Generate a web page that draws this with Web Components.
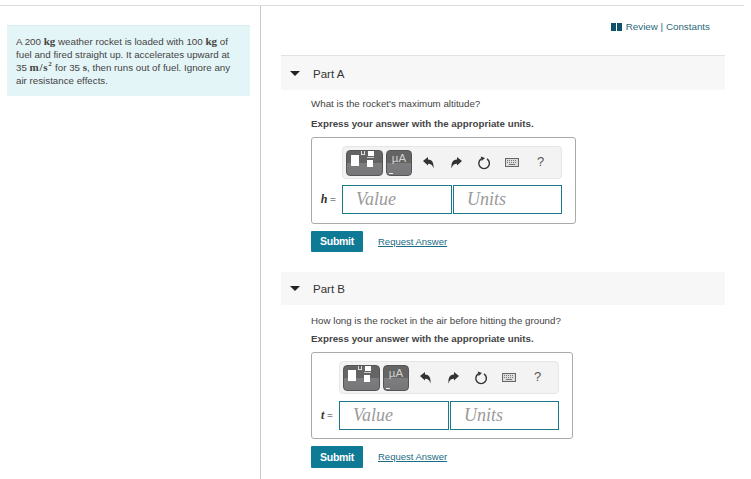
<!DOCTYPE html>
<html>
<head>
<meta charset="utf-8">
<style>
  html, body { margin: 0; padding: 0; background: #fff; }
  body { font-family: "Liberation Sans", Arial, sans-serif; color: #333; overflow: hidden; }
</style>
</head>
<body>
<mp-page>
  <problem-intro slot="left">
    <div>A 200 <b-unit>kg</b-unit> weather rocket is loaded with 100 <b-unit>kg</b-unit> of</div>
    <div>fuel and fired straight up. It accelerates upward at</div>
    <div>35 <b-unit class="wide">m/s<sup>2</sup></b-unit> for 35 <b-unit>s</b-unit>, then runs out of fuel. Ignore any</div>
    <div>air resistance effects.</div>
  </problem-intro>
  <review-links slot="right"></review-links>
  <part-section slot="right" label="Part A" question="What is the rocket's maximum altitude?" variable="h" box-width="265"></part-section>
  <part-section slot="right" label="Part B" question="How long is the rocket in the air before hitting the ground?" variable="t" box-width="262" style="margin-top:20px"></part-section>
</mp-page>

<script>
// inline units in the problem text
class BUnit extends HTMLElement {
  constructor() {
    super();
    this.attachShadow({ mode: 'open' }).innerHTML = `
      <style>
        :host { display: inline; font-family: "Liberation Serif", serif; font-weight: bold; font-size: 11px; color: #444; }
        :host(.wide) { letter-spacing: .7px; }
        ::slotted(sup) { font-size: 7px; line-height: 0; }
      </style>
      <slot></slot>`;
  }
}
customElements.define('b-unit', BUnit);

const pageTpl = document.createElement('template');
pageTpl.innerHTML = `
  <style>
    :host { display: block; width: 751px; height: 479px; box-sizing: border-box; padding-top: 5px; }
    .frame { width: 744px; height: 474px; border-top: 1px solid #dcdcdc; display: grid; grid-template-columns: 260px 1px 1fr; box-sizing: border-box; }
    .left { padding: 19px 10px 0 7px; }
    .rule { background: #c9c9c9; }
    .right { padding: 0 19px 0 20px; }
  </style>
  <div class="frame">
    <div class="left"><slot name="left"></slot></div>
    <div class="rule"></div>
    <div class="right"><slot name="right"></slot></div>
  </div>`;
class MpPage extends HTMLElement {
  constructor() {
    super();
    this.attachShadow({ mode: 'open' }).appendChild(pageTpl.content.cloneNode(true));
  }
}
customElements.define('mp-page', MpPage);

const introTpl = document.createElement('template');
introTpl.innerHTML = `
  <style>
    :host { display: block; width: 243px; height: 71px; box-sizing: border-box; background: #e4f5f7; border-top: 1px solid #d9eef0; padding: 9px 8px 0 9px; font-size: 9.75px; line-height: 13px; color: #444; white-space: nowrap; }
  </style>
  <slot></slot>`;
class ProblemIntro extends HTMLElement {
  constructor() {
    super();
    this.attachShadow({ mode: 'open' }).appendChild(introTpl.content.cloneNode(true));
  }
}
customElements.define('problem-intro', ProblemIntro);

const reviewTpl = document.createElement('template');
reviewTpl.innerHTML = `
  <style>
    :host { display: flex; justify-content: flex-end; align-items: center; height: 49px; box-sizing: border-box; padding: 0 15px 8px 0; gap: 4px; font-size: 9.8px; color: #2b6a7c; }
    svg { display: block; }
  </style>
  <svg width="11" height="8" viewBox="0 0 11 8"><path d="M0 0h5v8H0zM6 0h5v8H6z" fill="#0d5266"/></svg>
  <span>Review | Constants</span>`;
class ReviewLinks extends HTMLElement {
  constructor() {
    super();
    this.attachShadow({ mode: 'open' }).appendChild(reviewTpl.content.cloneNode(true));
  }
}
customElements.define('review-links', ReviewLinks);

const toolbarTpl = document.createElement('template');
toolbarTpl.innerHTML = `
  <style>
    :host { display: flex; align-items: center; height: 33px; box-sizing: border-box; background: #f3f3f3; border: 1px solid #e6e6e6; border-radius: 4px; padding: 0 0 0 3px; }
    .tpl, .mu { height: 26px; box-sizing: border-box; border-radius: 4px; background: linear-gradient(#646464 0, #646464 50%, #7d7d80 50%, #77777a 100%); border: 1px solid #555; position: relative; }
    .tpl { width: 37px; }
    .mu { width: 26px; margin-left: 3px; color: #d0d0d0; font: 11.5px/15px "Liberation Sans", sans-serif; text-align: center; }
    .mu::after { content: ""; position: absolute; left: 2px; bottom: 1px; width: 4px; height: 1px; background: #eee; }
    .tpl i { position: absolute; background: #fff; display: block; }
    .tpl i.a { left: 4px; top: 4px; width: 8px; height: 11px; }
    .tpl i.b { left: 14px; top: 0; width: 4px; height: 4px; background: none; border: 1px solid #ddd; border-top: none; box-sizing: border-box; }
    .tpl i.c { left: 21px; top: 0; width: 6px; height: 5px; }
    .tpl i.d { left: 20px; top: 6px; width: 7px; height: 1px; background: #ccc; }
    .tpl i.e { left: 20px; top: 9px; width: 6px; height: 7px; }
    .tools { display: grid; grid-template-columns: repeat(5, 28px); margin-left: 2px; justify-items: center; align-items: center; }
    svg { display: block; }
    .help { font-size: 13px; line-height: 15px; color: #555; margin: -2px 0 0 1px; }
  </style>
  <div class="tpl"><i class="a"></i><i class="b"></i><i class="c"></i><i class="d"></i><i class="e"></i></div>
  <div class="mu">&#181;A</div>
  <div class="tools">
    <svg width="11" height="12" viewBox="0 0 11 12"><path d="M0 4 5 0v2.600c4 0 6 3 5.500 9-1-3.500-2.500-4.800-5.500-4.800V8.600z" fill="#333"/></svg>
    <svg width="11" height="12" viewBox="0 0 11 12"><path d="M11 4 6 0v2.600c-4 0-6 3-5.500 9 1-3.500 2.500-4.800 5.500-4.800V8.600z" fill="#333"/></svg>
    <svg width="14" height="14" viewBox="0 0 14 14"><path d="M10 2.900a5.300 5.300 0 1 1-5.800 0" fill="none" stroke="#333" stroke-width="1.400"/><path d="M3.800 .6 8 2 4.600 5z" fill="#333"/></svg>
    <svg width="14" height="9" viewBox="0 0 14 9"><rect x=".5" y=".5" width="13" height="8" fill="#ddd" stroke="#666"/><path d="M2 2.500h10M2 4.500h10" stroke="#777" stroke-dasharray="1 1"/><path d="M4 6.500h6" stroke="#777"/></svg>
    <span class="help">?</span>
  </div>`;
class MathToolbar extends HTMLElement {
  constructor() {
    super();
    this.attachShadow({ mode: 'open' }).appendChild(toolbarTpl.content.cloneNode(true));
  }
}
customElements.define('math-toolbar', MathToolbar);

const partTpl = document.createElement('template');
partTpl.innerHTML = `
  <style>
    :host { display: block; }
    .head { display: flex; align-items: center; height: 33px; background: #f7f7f7; padding-left: 9px; font-size: 11.5px; color: #333; }
    :host([label="Part A"]) .head { border-top: 1px solid #e2e2e2; height: 35px; box-sizing: border-box; }
    :host([label="Part A"]) .label { margin-top: 2px; }
    .tri { width: 0; height: 0; border-left: 5px solid transparent; border-right: 5px solid transparent; border-top: 5px solid #222; margin-right: 13px; }
    .body { padding: 6px 0 0 30px; }
    .q { font-size: 9.75px; line-height: 13px; color: #444; height: 13px; margin-top: 1px; }
    :host([label="Part B"]) .q { margin-top: 3px; }
    .hint { font-size: 9.75px; font-weight: bold; line-height: 13px; color: #444; margin-top: 7px; height: 14px; }
    :host([label="Part B"]) .hint { margin-top: 5px; }
    .box { box-sizing: border-box; height: 87px; margin-top: 6px; border: 1px solid #aaa; border-radius: 3px; padding: 8px 13px 0 0; }
    .grid { display: grid; row-gap: 6px; justify-content: end; grid-template-columns: auto 220px; }
    :host([label="Part B"]) .grid { row-gap: 7px; }
    math-toolbar { grid-column: 2; }
    .var { display: flex; align-items: center; justify-content: flex-end; padding-right: 6px; font: 10.5px "Liberation Serif", serif; color: #333; white-space: pre; }
    .var em { font-weight: bold; font-size: 12px; }
    .inputs { display: grid; grid-template-columns: 110px 109px; gap: 1px; }
    .inputs div { box-sizing: border-box; height: 29px; border: 1px solid #1a7a8c; padding-left: 13px; font: italic 18px/26px "Liberation Serif", serif; color: #9a9a9a; }
    .actions { display: flex; align-items: center; margin-top: 7px; gap: 15px; }
    .submit { width: 52px; height: 21px; background: #0f7a96; color: #fff; font-size: 10.5px; font-weight: bold; text-align: center; line-height: 21px; border-radius: 1px; letter-spacing: -.3px; }
    :host([label="Part B"]) .submit { height: 22px; line-height: 22px; }
    .req { font-size: 9.5px; color: #1a6d85; text-decoration: underline; margin-top: -1px; }
  </style>
  <div class="head"><span class="tri"></span><span class="label"></span></div>
  <div class="body">
    <div class="q"></div>
    <div class="hint">Express your answer with the appropriate units.</div>
    <div class="box">
      <div class="grid">
        <math-toolbar></math-toolbar>
        <div class="var"><em></em> =</div>
        <div class="inputs"><div>Value</div><div>Units</div></div>
      </div>
    </div>
    <div class="actions"><div class="submit">Submit</div><span class="req">Request Answer</span></div>
  </div>`;
class PartSection extends HTMLElement {
  constructor() {
    super();
    this.attachShadow({ mode: 'open' }).appendChild(partTpl.content.cloneNode(true));
  }

  connectedCallback() {
    const root = this.shadowRoot;
    root.querySelector('.label').textContent = this.getAttribute('label');
    root.querySelector('.q').textContent = this.getAttribute('question');
    root.querySelector('.var em').textContent = this.getAttribute('variable');
    root.querySelector('.box').style.width = this.getAttribute('box-width') + 'px';
  }
}
customElements.define('part-section', PartSection);
</script>
</body>
</html>
